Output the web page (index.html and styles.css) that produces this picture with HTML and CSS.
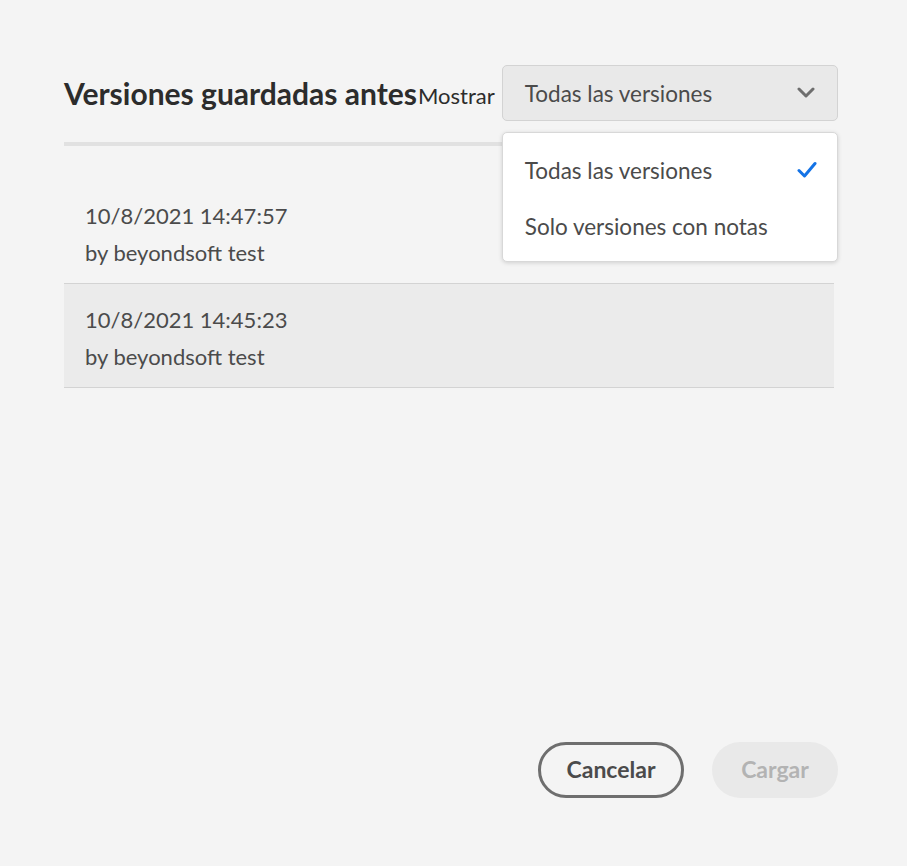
FILE: index.html
```html
<!DOCTYPE html>
<html lang="es">
<head>
<meta charset="utf-8">
<title>Versiones guardadas antes</title>
<link rel="stylesheet" href="styles.css">
</head>
<body>
<div class="dialog">
  <div class="header">
    <h1 class="title">Versiones guardadas antes</h1>
    <span class="label">Mostrar</span>
    <div class="picker-wrap">
      <button class="picker">
        <span>Todas las versiones</span>
        <svg class="chevron" width="18" height="12" viewBox="0 0 18 12"><path d="M2 2 L9 9 L16 2" fill="none" stroke="#6e6e6e" stroke-width="3" stroke-linecap="round" stroke-linejoin="round"/></svg>
      </button>
      <ul class="menu">
        <li class="menu-item selected"><span>Todas las versiones</span>
          <svg class="check" width="20" height="18" viewBox="0 0 20 18"><path d="M2 9.5 L7.5 15 L18 2.5" fill="none" stroke="#1473e6" stroke-width="3" stroke-linecap="round" stroke-linejoin="round"/></svg>
        </li>
        <li class="menu-item"><span>Solo versiones con notas</span></li>
      </ul>
    </div>
  </div>
  <div class="divider"></div>
  <div class="list">
    <div class="row">
      <div class="date">10/8/2021 14:47:57</div>
      <div class="author">by beyondsoft test</div>
    </div>
    <div class="row active">
      <div class="date">10/8/2021 14:45:23</div>
      <div class="author">by beyondsoft test</div>
    </div>
  </div>
  <div class="footer">
    <button class="btn secondary">Cancelar</button>
    <button class="btn disabled">Cargar</button>
  </div>
</div>
</body>
</html>
```
FILE: styles.css
```css
* { box-sizing: border-box; }
html, body { margin: 0; padding: 0; }
body {
  background: #f4f4f4;
  font-family: Lato, "Open Sans", sans-serif;
  color: #4b4b4b;
}
.dialog {
  height: 866px;
  padding: 65px 69px 68px 64px;
  display: flex;
  flex-direction: column;
}
.header {
  display: flex;
  align-items: center;
  height: 56px;
}
.title {
  margin: 0;
  font-size: 30px;
  font-weight: 700;
  color: #2c2c2c;
  white-space: nowrap;
}
.label {
  font-size: 22px;
  color: #2c2c2c;
  margin-left: 1px;
  margin-top: 4px;
}
.picker-wrap {
  position: relative;
  margin-left: 7px;
  width: 336px;
  flex-shrink: 0;
}
.picker {
  width: 336px;
  height: 56px;
  border: 1px solid #d3d3d3;
  border-radius: 5px;
  background: #e9e9e9;
  display: flex;
  align-items: center;
  justify-content: space-between;
  padding: 0 22px 0 22px;
  font-family: inherit;
  font-size: 22.5px;
  color: #4b4b4b;
}
.menu {
  position: absolute;
  top: 67px;
  left: 0;
  width: 336px;
  margin: 0;
  padding: 9px 0 7px;
  list-style: none;
  background: #fff;
  border: 1px solid #d8d8d8;
  border-radius: 5px;
  box-shadow: 0 1px 4px rgba(0,0,0,0.15);
  z-index: 2;
}
.menu-item {
  height: 56px;
  display: flex;
  align-items: center;
  justify-content: space-between;
  padding: 0 20px 0 22px;
  font-size: 22.5px;
  color: #4b4b4b;
}
.divider {
  height: 4px;
  background: #e1e1e1;
  margin-top: 21px;
  margin-right: 4px;
}
.list {
  margin-top: 34px;
  margin-right: 4px;
}
.row {
  padding: 17px 21px 12px;
  height: 104px;
  border-bottom: 1px solid #d3d3d3;
}
.row.active { background: #ebebeb; }
.date, .author {
  font-size: 22px;
  line-height: 37px;
  color: #4b4b4b;
}
.footer {
  margin-top: auto;
  display: flex;
  justify-content: flex-end;
  gap: 28px;
}
.btn {
  height: 56px;
  border-radius: 28px;
  font-family: inherit;
  font-size: 23px;
  font-weight: 700;
  padding: 0 20px 3px;
}
.btn.secondary {
  border: 3px solid #6e6e6e;
  background: transparent;
  color: #4b4b4b;
  width: 146px;
}
.btn.disabled {
  border: none;
  background: #e9e9e9;
  color: #b3b3b3;
  width: 126px;
}
```
